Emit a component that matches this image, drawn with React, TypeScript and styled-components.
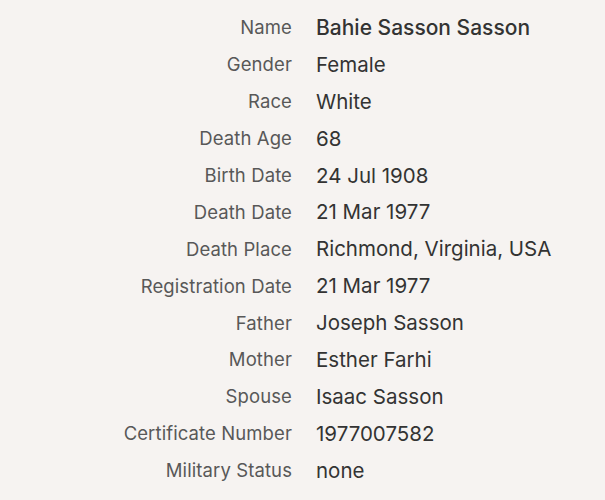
import React from "react";
import styled, { createGlobalStyle } from "styled-components";

const Global = createGlobalStyle`
  html, body { margin: 0; padding: 0; background: #f6f3f1; }
  body { font-family: Inter, "Liberation Sans", sans-serif; }
`;

const Page = styled.div`
  width: 605px;
  height: 500px;
  background: #f6f3f1;
  box-sizing: border-box;
  padding-top: 9px;
`;

const Table = styled.dl`
  margin: 0;
  display: grid;
  grid-template-columns: 292px 1fr;
  column-gap: 24px;
  grid-auto-rows: 36.9px;
  align-items: center;
`;

const Label = styled.dt`
  text-align: right;
  font-size: 18.5px;
  color: #585858;
  letter-spacing: 0.1px;
  white-space: nowrap;
`;

const Value = styled.dd<{ $strong?: boolean }>`
  margin: 0;
  font-size: ${(p) => (p.$strong ? "21px" : "20.5px")};
  color: #333;
  letter-spacing: 0;
  white-space: nowrap;
  font-weight: ${(p) => (p.$strong ? 500 : 400)};
`;

const rows: [string, string][] = [
  ["Name", "Bahie Sasson Sasson"],
  ["Gender", "Female"],
  ["Race", "White"],
  ["Death Age", "68"],
  ["Birth Date", "24 Jul 1908"],
  ["Death Date", "21 Mar 1977"],
  ["Death Place", "Richmond, Virginia, USA"],
  ["Registration Date", "21 Mar 1977"],
  ["Father", "Joseph Sasson"],
  ["Mother", "Esther Farhi"],
  ["Spouse", "Isaac Sasson"],
  ["Certificate Number", "1977007582"],
  ["Military Status", "none"],
];

export default function App() {
  return (
    <Page>
      <Global />
      <Table>
        {rows.map(([k, v], i) => (
          <React.Fragment key={k}>
            <Label>{k}</Label>
            <Value $strong={i === 0}>{v}</Value>
          </React.Fragment>
        ))}
      </Table>
    </Page>
  );
}
